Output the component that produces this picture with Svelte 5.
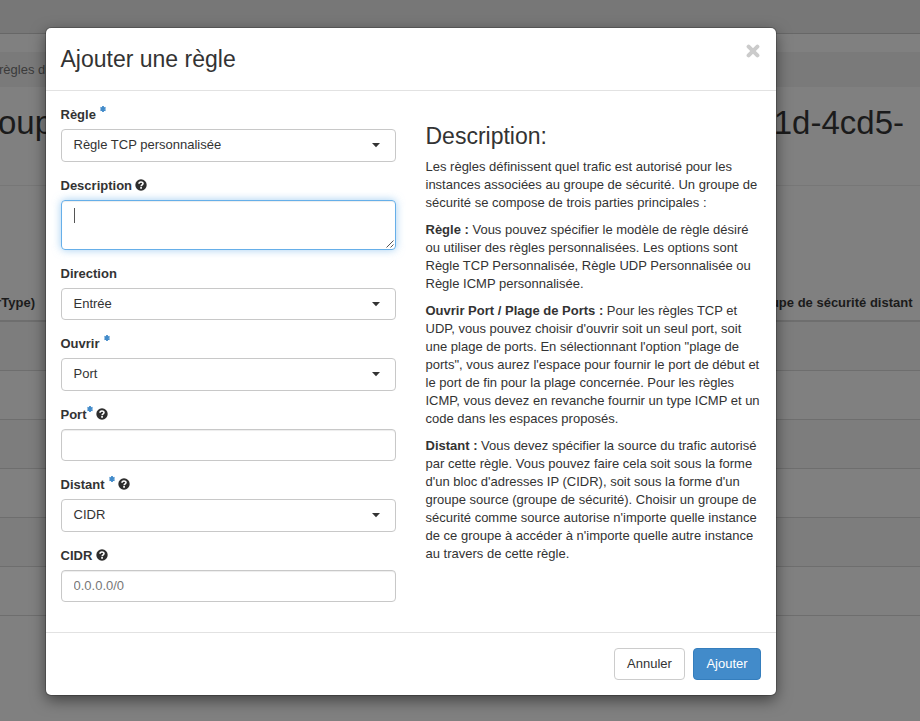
<script>
  const rows = [1, 2, 3, 4, 5, 6];
  let description = $state('');
  const fields = [
    { label: 'Règle', required: true, kind: 'select', value: 'Règle TCP personnalisée' },
    { label: 'Description', help: true, kind: 'textarea' },
    { label: 'Direction', kind: 'select', short: true, value: 'Entrée' },
    { label: 'Ouvrir', required: true, kind: 'select', value: 'Port' },
    { label: 'Port', required: true, tight: true, help: true, kind: 'input', placeholder: '' },
    { label: 'Distant', required: true, help: true, kind: 'select', value: 'CIDR' },
    { label: 'CIDR', help: true, kind: 'input', placeholder: '0.0.0.0/0' }
  ];
</script>

<div class="screen">
  <div class="page">
    <div class="navbar"></div>
    <div class="breadcrumb">règles du</div>
    <div class="title"><span>oup</span><span>1d-4cd5-</span></div>
    <div class="thead"><span>rType)</span><span>Groupe de sécurité distant</span></div>
    {#each rows as row}
      <div class="row"></div>
    {/each}
  </div>

  <div class="modal">
    <header>
      <h3>Ajouter une règle</h3>
      <button class="close" aria-label="Fermer">
        <svg width="14" height="14" viewBox="0 0 14 14"><path d="M2.6 2.6L11.4 11.4M11.4 2.6L2.6 11.4" stroke="#cbcbcb" stroke-width="4" stroke-linecap="round" /></svg>
      </button>
    </header>
    <div class="body">
      <form>
        {#each fields as f}
          <div class="group">
            <div class="label">
              <span>{f.label}</span>
              {#if f.required}
                <svg class="star" class:tight={f.tight} width="6" height="6" viewBox="0 0 6 6"><path d="M3 0V6M.4 1.5L5.6 4.5M5.6 1.5L.4 4.5" stroke="#428bca" stroke-width="1.8" /></svg>
              {/if}
              {#if f.help}
                <svg class="help" width="12" height="12" viewBox="0 0 12 12"><circle cx="6" cy="6" r="5.7" fill="#2e2e2e" /><path d="M4 4.7C4 2.5 8 2.4 8 4.5C8 5.8 6.2 5.8 6.1 7.2" fill="none" stroke="#fff" stroke-width="1.6" /><path d="M5.2 8.1h1.7v1.6H5.2z" fill="#fff" /></svg>
              {/if}
            </div>
            {#if f.kind === 'select'}
              <div class="control select" class:short={f.short}>
                <span>{f.value}</span>
                <svg width="8" height="5" viewBox="0 0 8 5"><path d="M0 0H8L4 4.2Z" fill="#333" /></svg>
              </div>
            {:else if f.kind === 'textarea'}
              <div class="area">
                <span>{description}</span><i></i>
                <svg width="8" height="8" viewBox="0 0 8 8"><path d="M.5 7.5L7.5 .5M4.5 7.5L7.5 4.5" stroke="#555" stroke-width="1" /></svg>
              </div>
            {:else}
              <input class="control" placeholder={f.placeholder} />
            {/if}
          </div>
        {/each}
      </form>
      <section>
        <h3>Description:</h3>
        <p>Les règles définissent quel trafic est autorisé pour les<br />instances associées au groupe de sécurité. Un groupe de<br />sécurité se compose de trois parties principales :</p>
        <p><b>Règle :</b> Vous pouvez spécifier le modèle de règle désiré<br />ou utiliser des règles personnalisées. Les options sont<br />Règle TCP Personnalisée, Règle UDP Personnalisée ou<br />Règle ICMP personnalisée.</p>
        <p><b>Ouvrir Port / Plage de Ports :</b> Pour les règles TCP et<br />UDP, vous pouvez choisir d'ouvrir soit un seul port, soit<br />une plage de ports. En sélectionnant l'option "plage de<br />ports", vous aurez l'espace pour fournir le port de début et<br />le port de fin pour la plage concernée. Pour les règles<br />ICMP, vous devez en revanche fournir un type ICMP et un<br />code dans les espaces proposés.</p>
        <p><b>Distant :</b> Vous devez spécifier la source du trafic autorisé<br />par cette règle. Vous pouvez faire cela soit sous la forme<br />d'un bloc d'adresses IP (CIDR), soit sous la forme d'un<br />groupe source (groupe de sécurité). Choisir un groupe de<br />sécurité comme source autorise n'importe quelle instance<br />de ce groupe à accéder à n'importe quelle autre instance<br />au travers de cette règle.</p>
      </section>
    </div>
    <footer>
      <button class="btn">Annuler</button>
      <button class="btn primary">Ajouter</button>
    </footer>
  </div>
</div>

<style>
  :global(body) { margin: 0; overflow: hidden; }
  .screen, .screen * { box-sizing: border-box; }
  .screen {
    position: relative;
    width: 920px;
    height: 721px;
    overflow: hidden;
    background: #808080;
    color: #333;
    font: 13px/18px "Liberation Sans", Arial, sans-serif;
  }
  .navbar { height: 34px; background: #777; border-bottom: 1px solid #676767; }
  .breadcrumb { height: 35px; margin-top: 18px; padding-top: 9px; background: #7a7a7a; color: #3b3b3b; white-space: nowrap; text-indent: -1px; }
  .title {
    display: flex;
    justify-content: space-between;
    height: 99px;
    padding: 17px 16px 0 0;
    border-bottom: 1px solid #777;
    color: #1b1b1b;
    font-size: 33px;
    line-height: 38px;
  }
  .title span:first-child { margin-left: -2px; }
  .thead {
    display: flex;
    justify-content: space-between;
    height: 136px;
    padding: 108px 7.5px 0 0;
    border-bottom: 2px solid #6e6e6e;
    color: #1b1b1b;
    font-weight: bold;
  }
  .thead span:first-child { margin-left: -3.7px; }
  .row { height: 49px; border-bottom: 1px solid #6e6e6e; }
  .row:nth-child(odd) { background: #7d7d7d; }
  .modal {
    position: absolute;
    left: 46px;
    top: 28px;
    width: 730px;
    height: 667px;
    display: flex;
    flex-direction: column;
    background: #fff;
    border-radius: 5px;
    box-shadow: 0 0 0 1px rgba(0, 0, 0, .2), 0 5px 15px rgba(0, 0, 0, .5);
  }
  header { display: flex; justify-content: space-between; height: 63px; padding: 18px 15px 0 14.5px; border-bottom: 1px solid #e2e2e2; }
  h3 { margin: 0; font-size: 23px; line-height: 26px; font-weight: 400; }
  .close { width: 16px; height: 16px; padding: 0; margin-top: -3px; border: 0; background: none; }
  .close svg { display: block; margin: 1px; }
  .body { display: flex; gap: 29.5px; height: 541px; padding: 14px 15px 0 15px; }
  form { width: 335px; }
  .group { margin-bottom: 14px; }
  .label { display: flex; height: 19px; margin-bottom: 5px; line-height: 20px; font-weight: bold; }
  .label span { margin-left: -.5px; }
  .star { margin: 1px 0 0 4px; flex: none; }
  .star.tight { margin-left: 0; }
  .help { margin: 3px 0 0 3.3px; flex: none; }
  .star + .help { margin-left: 3.4px; }
  .control {
    display: block;
    width: 100%;
    height: 32px;
    padding: 0 11.5px;
    border: 1px solid #c8c8c8;
    border-radius: 4px;
    background: #fff;
    font: inherit;
    color: #333;
  }
  input.control { box-shadow: inset 0 1px 1px rgba(0, 0, 0, .075); outline: 0; padding-bottom: 2px; }
  input::placeholder { color: #777; opacity: 1; }
  .select { display: flex; justify-content: space-between; align-items: flex-start; height: 33px; padding: 6px 15px 0 11.5px; }
  .select.short { height: 32px; }
  .select svg { margin-top: 7px; }
  .area {
    display: flex;
    height: 50px;
    padding: 7px 0 0 12px;
    border: 1px solid #66afe9;
    border-radius: 4px;
    box-shadow: inset 0 1px 1px rgba(0, 0, 0, .075), 0 0 8px rgba(102, 175, 233, .6);
  }
  .area i { width: 1px; height: 15px; background: #555; }
  .area svg { margin: auto 1px 1px auto; }
  section { padding-top: 18px; white-space: nowrap; }
  section h3 { margin-bottom: 9px; }
  p { margin: 0 0 9px; }
  footer { display: flex; justify-content: flex-end; gap: 8px; height: 63px; padding: 15px 15px 0 0; border-top: 1px solid #e2e2e2; }
  .btn { height: 32px; width: 71px; padding: 0; border: 1px solid #ccc; border-radius: 4px; background: #fff; color: #333; font: inherit; }
  .primary { width: 68px; background: #428bca; border-color: #357ebd; color: #fff; }
</style>
